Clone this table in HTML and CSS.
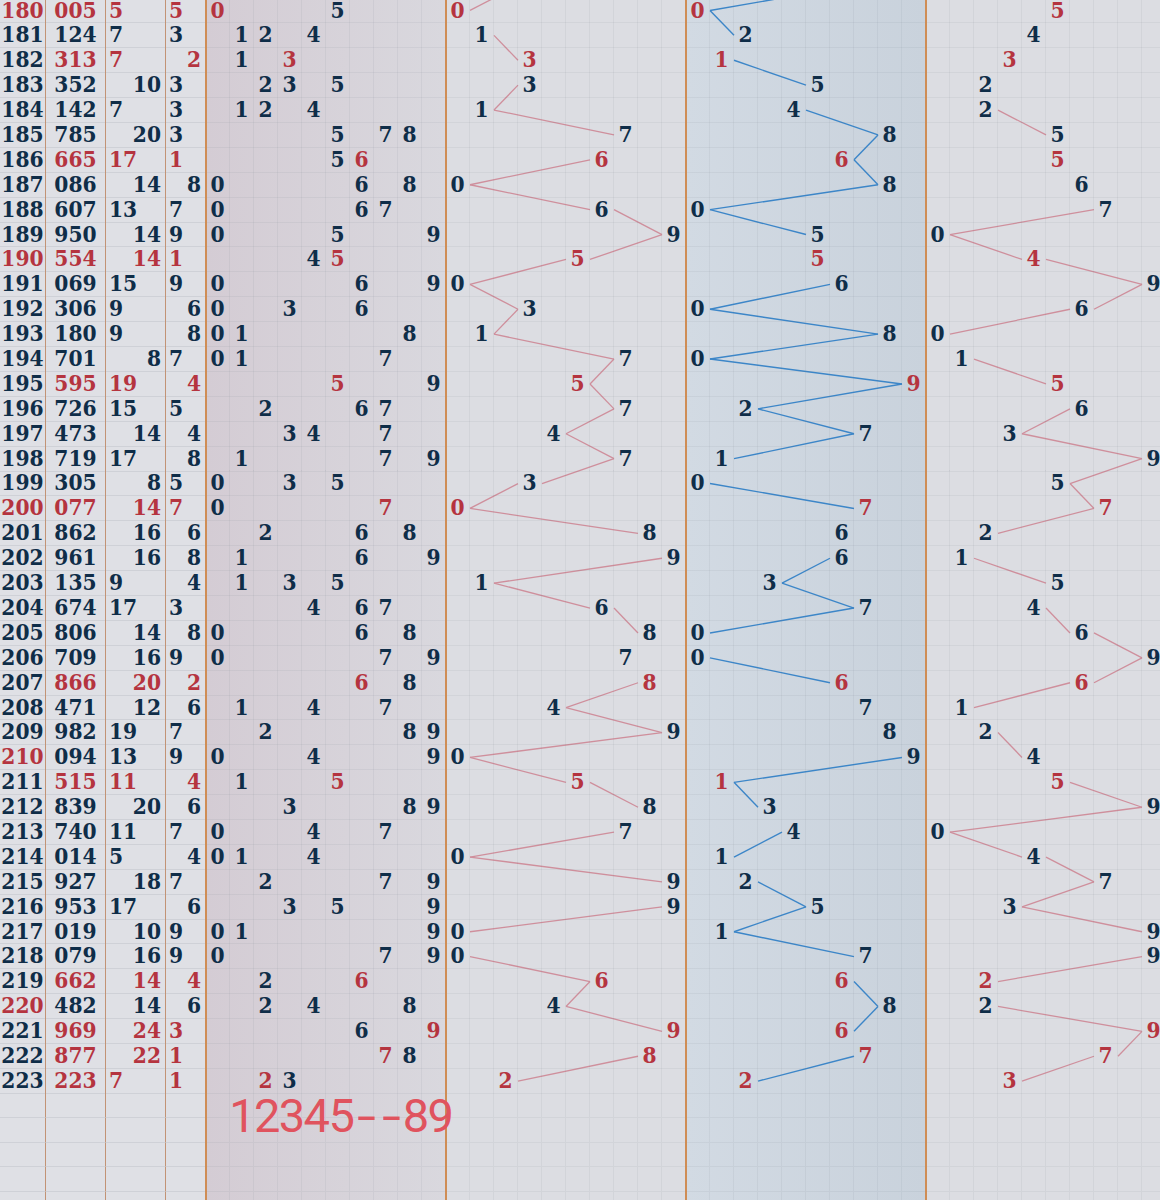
FILE: index.html
```html
<!DOCTYPE html>
<html lang="zh">
<head>
<meta charset="utf-8">
<title>走势图</title>
<link rel="stylesheet" href="styles.css">
</head>
<body>
<div class="chart">
  <div class="left" id="left"></div>
  <div class="zone z-dist" id="zd">
    <div class="mark"><span>1</span><span>2</span><span>3</span><span>4</span><span>5</span><span class="dash">-</span><span class="dash">-</span><span>8</span><span>9</span></div>
  </div>
  <div class="zone z-h" id="zh"></div>
  <div class="zone z-t" id="zt"></div>
  <div class="zone z-u" id="zu"></div>
</div>
<script src="script.js"></script>
</body>
</html>
```
FILE: styles.css
```css
html, body {
  margin: 0;
  padding: 0;
  overflow: hidden;
  background: #dcdde2;
}
.chart {
  display: flex;
  width: 1166px;
  margin-top: -2.45px;
  font-family: "DejaVu Serif Condensed", "DejaVu Serif", "Liberation Serif", serif;
  font-stretch: condensed;
  font-weight: bold;
  font-size: 22.5px;
  color: #0f2d48;
}
.left {
  width: 206px;
  flex: none;
  background: #dfe0e5;
}
.lrow {
  display: grid;
  grid-template-columns: 46px 60px 60px 40px;
  height: 24.9px;
  line-height: 24.9px;
}
.lrow > div {
  box-sizing: border-box;
  border-right: 1px solid #c29375;
  border-bottom: 1px solid #cfd1d7;
  white-space: nowrap;
  overflow: visible;
}
.lrow > div.c-span { border-right: none; padding: 0 5px 0 3px; }
.c-per, .c-num { text-align: center; }
.c-sum { padding: 0 4px 0 3px; }
.l { text-align: left; }
.r { text-align: right; }
.red { color: #b5343f; }

.zone {
  width: 240px;
  flex: none;
  position: relative;
}
.zone::before {
  content: "";
  position: absolute;
  left: -1px;
  top: 0;
  bottom: 0;
  width: 2px;
  background: #cf8d55;
  z-index: 3;
}
.z-dist { background: linear-gradient(to right, #d4ccd4, #d9d8de); }
.z-t { background: linear-gradient(to right, #d2dae3, #c9d2dc); }
.zrow {
  display: grid;
  grid-template-columns: repeat(10, 24px);
  height: 24.9px;
  line-height: 24.9px;
  position: relative;
  z-index: 1;
}
.zrow > span {
  box-sizing: border-box;
  border-right: 1px solid rgba(110, 118, 135, 0.09);
  border-bottom: 1px solid rgba(110, 118, 135, 0.09);
  display: flex;
  justify-content: center;
}
.lines {
  position: absolute;
  left: 0;
  top: 0;
  overflow: visible;
  z-index: 0;
  pointer-events: none;
}
.mark {
  position: absolute;
  left: 24px;
  top: 1094px;
  display: flex;
  font-family: Roboto, "Noto Sans", sans-serif;
  font-stretch: normal;
  font-weight: 400;
  font-size: 47px;
  line-height: 47px;
  color: #e0535e;
  z-index: 4;
}
.mark span {
  width: 24.8px;
  flex: none;
  display: flex;
  justify-content: center;
}
.mark .dash { transform: scaleX(1.45); }
```
FILE: script.js
```js
(function () {
  var data = [
    [180,'005'],[181,'124'],[182,'313'],[183,'352'],[184,'142'],[185,'785'],
    [186,'665'],[187,'086'],[188,'607'],[189,'950'],[190,'554'],[191,'069'],
    [192,'306'],[193,'180'],[194,'701'],[195,'595'],[196,'726'],[197,'473'],
    [198,'719'],[199,'305'],[200,'077'],[201,'862'],[202,'961'],[203,'135'],
    [204,'674'],[205,'806'],[206,'709'],[207,'866'],[208,'471'],[209,'982'],
    [210,'094'],[211,'515'],[212,'839'],[213,'740'],[214,'014'],[215,'927'],
    [216,'953'],[217,'019'],[218,'079'],[219,'662'],[220,'482'],[221,'969'],
    [222,'877'],[223,'223']
  ];
  var prev = [3, 7, 5];
  var H = 24.9, EXTRA = 5;
  var colors = ['#cf8f9c', '#3c86c8', '#cf8f9c'];

  function el(tag, cls, txt) {
    var e = document.createElement(tag);
    if (cls) e.className = cls;
    if (txt !== undefined) e.textContent = txt;
    return e;
  }
  function digits(n) { return n.split('').map(Number); }
  function isRep(n) { return new Set(n.split('')).size < 3; }

  var left = document.getElementById('left');
  var zd = document.getElementById('zd');
  var zones = [document.getElementById('zh'), document.getElementById('zt'), document.getElementById('zu')];

  data.forEach(function (r) {
    var p = r[0], n = r[1], ds = digits(n), rep = isRep(n);
    var rc = rep ? ' red' : '';
    var sum = ds[0] + ds[1] + ds[2];
    var span = Math.max.apply(null, ds) - Math.min.apply(null, ds);
    var lr = el('div', 'lrow');
    lr.appendChild(el('div', 'c-per' + (p % 10 === 0 ? ' red' : ''), String(p)));
    lr.appendChild(el('div', 'c-num' + rc, n));
    lr.appendChild(el('div', 'c-sum ' + (sum % 2 ? 'l' : 'r') + rc, String(sum)));
    lr.appendChild(el('div', 'c-span ' + (span % 2 ? 'l' : 'r') + rc, String(span)));
    left.appendChild(lr);

    var dr = el('div', 'zrow');
    for (var d = 0; d < 10; d++) {
      var cnt = ds.filter(function (x) { return x === d; }).length;
      dr.appendChild(el('span', cnt > 1 ? 'red' : '', cnt ? String(d) : ''));
    }
    zd.appendChild(dr);

    zones.forEach(function (z, k) {
      var zr = el('div', 'zrow');
      for (var d2 = 0; d2 < 10; d2++) {
        zr.appendChild(el('span', (d2 === ds[k] && rep) ? 'red' : '', d2 === ds[k] ? String(d2) : ''));
      }
      z.appendChild(zr);
    });
  });

  for (var i = 0; i < EXTRA; i++) {
    var lr2 = el('div', 'lrow');
    ['c-per', 'c-num', 'c-sum', 'c-span'].forEach(function (c) { lr2.appendChild(el('div', c, '')); });
    left.appendChild(lr2);
    [zd].concat(zones).forEach(function (z) {
      var zr = el('div', 'zrow');
      for (var d = 0; d < 10; d++) zr.appendChild(el('span', '', ''));
      z.appendChild(zr);
    });
  }

  var NS = 'http://www.w3.org/2000/svg';
  var total = (data.length + EXTRA) * H;
  zones.forEach(function (z, k) {
    var svg = document.createElementNS(NS, 'svg');
    svg.setAttribute('class', 'lines');
    svg.setAttribute('width', '240');
    svg.setAttribute('height', String(total));
    var pts = [prev[k]].concat(data.map(function (r) { return Number(r[1][k]); }));
    for (var i = 0; i < pts.length - 1; i++) {
      var a = pts[i], b = pts[i + 1];
      if (Math.abs(a - b) < 2) continue;
      var s = b > a ? 1 : -1;
      var x1 = 12 + 24 * a + 12 * s, x2 = 12 + 24 * b - 12 * s;
      var y1 = (i - 0.5) * H, y2 = (i + 0.5) * H;
      var ln = document.createElementNS(NS, 'line');
      ln.setAttribute('x1', x1); ln.setAttribute('y1', y1);
      ln.setAttribute('x2', x2); ln.setAttribute('y2', y2);
      ln.setAttribute('stroke', colors[k]);
      ln.setAttribute('stroke-width', k === 1 ? '1.4' : '1.3');
      svg.appendChild(ln);
    }
    z.insertBefore(svg, z.firstChild);
  });
})();
```
